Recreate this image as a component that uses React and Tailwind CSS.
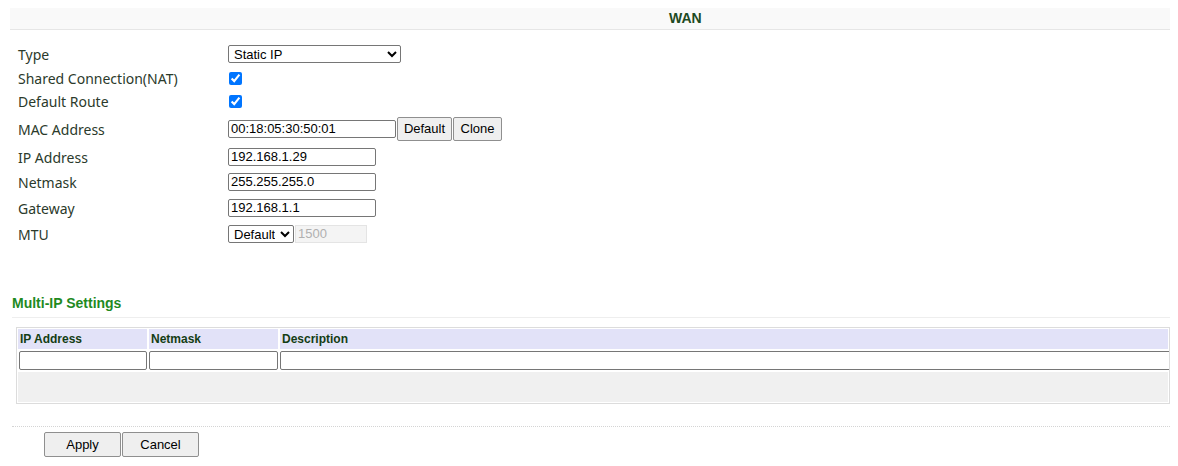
import React from "react";

const LABEL = "text-[14px] text-[#2b3a2b] [font-family:'Noto_Sans',sans-serif]";
const FIELD = "h-[18px] border border-[#767676] rounded-[2px] bg-white px-[2px] text-[13px] text-black [font-family:'Liberation_Sans',Arial,sans-serif] outline-none";
const BTN = "border border-[#8f8f8f] rounded-[2px] bg-[#efefef] text-[13px] text-black [font-family:'Liberation_Sans',Arial,sans-serif]";

function Row({ label, h, children }) {
  return (
    <div className="flex items-center" style={{ height: h }}>
      <div className={`w-[210px] shrink-0 ${LABEL}`}>{label}</div>
      <div className="flex items-center">{children}</div>
    </div>
  );
}

function Check() {
  return <input type="checkbox" defaultChecked className="w-[13px] h-[13px] ml-[1px] accent-[#0075ff]" />;
}

export default function App() {
  return (
    <div className="w-[1178px] h-[466px] bg-white overflow-hidden [font-family:'Liberation_Sans',Arial,sans-serif]">
      {/* title bar */}
      <div className="ml-[10px] mr-[8px] mt-[8px] h-[22px] bg-[#f9f9f9] border-b border-[#e6e6e6] flex items-center pl-[659px]">
        <span className="text-[14px] font-bold text-[#1d4a22]">WAN</span>
      </div>

      <div className="ml-[18px] mt-[12px]">
        <Row label="Type" h={24}>
          <select className={`${FIELD} w-[173px] pl-[1px]`} defaultValue="static">
            <option value="static">Static IP</option>
            <option value="dhcp">DHCP</option>
            <option value="pppoe">PPPoE</option>
          </select>
        </Row>
        <Row label="Shared Connection(NAT)" h={24}><Check /></Row>
        <Row label="Default Route" h={23}><Check /></Row>
        <Row label="MAC Address" h={32}>
          <input className={`${FIELD} w-[168px]`} defaultValue="00:18:05:30:50:01" />
          <button className={`${BTN} h-[24px] w-[55px] ml-[1px]`}>Default</button>
          <button className={`${BTN} h-[24px] w-[49px] ml-[1px]`}>Clone</button>
        </Row>
        <Row label="IP Address" h={24}>
          <input className={`${FIELD} w-[148px]`} defaultValue="192.168.1.29" />
        </Row>
        <Row label="Netmask" h={26}>
          <input className={`${FIELD} w-[148px]`} defaultValue="255.255.255.0" />
        </Row>
        <Row label="Gateway" h={26}>
          <input className={`${FIELD} w-[148px]`} defaultValue="192.168.1.1" />
        </Row>
        <Row label="MTU" h={26}>
          <select className={`${FIELD} w-[66px] pl-[1px]`} defaultValue="d">
            <option value="d">Default</option>
            <option value="m">Manual</option>
          </select>
          <input
            disabled
            className="h-[18px] w-[72px] ml-[1px] border border-[#e4e4e4] bg-[#f4f4f4] px-[2px] text-[13px] text-[#b0b0b0] [font-family:'Liberation_Sans',Arial,sans-serif]"
            defaultValue="1500"
          />
        </Row>
      </div>

      {/* Multi-IP */}
      <div className="ml-[12px] mr-[8px] mt-[48px]">
        <div className="text-[14px] font-bold text-[#1f8a1f] leading-[17px] pb-[5px] border-b border-[#eeeeee]">
          Multi-IP Settings
        </div>
        <div className="ml-[4px] mt-[9px] border border-[#dcdcdc] p-[1px] overflow-hidden">
          <div className="grid grid-cols-[129px_129px_1fr] gap-x-[2px] gap-y-[2px] text-[12px]">
            <div className="bg-[#e2e2f8] h-[20px] flex items-center pl-[2px] font-bold text-[#143d14]">IP Address</div>
            <div className="bg-[#e2e2f8] h-[20px] flex items-center pl-[2px] font-bold text-[#143d14]">Netmask</div>
            <div className="bg-[#e2e2f8] h-[20px] flex items-center pl-[2px] font-bold text-[#143d14]">Description</div>
            <input className="h-[19px] ml-[1px] border border-[#767676] rounded-[2px] bg-white" />
            <input className="h-[19px] border border-[#767676] rounded-[2px] bg-white" />
            <input className="h-[19px] border border-[#767676] rounded-[2px] bg-white -mr-[6px]" />
            <div className="col-span-3 h-[30px] bg-[#f0f0f0]" />
          </div>
        </div>
        <div className="mt-[22px] border-b border-dotted border-[#d4d4d4]" />
        <div className="flex mt-[5px] ml-[32px]">
          <button className={`${BTN} h-[25px] w-[77px]`}>Apply</button>
          <button className={`${BTN} h-[25px] w-[77px] ml-[1px]`}>Cancel</button>
        </div>
      </div>
    </div>
  );
}
